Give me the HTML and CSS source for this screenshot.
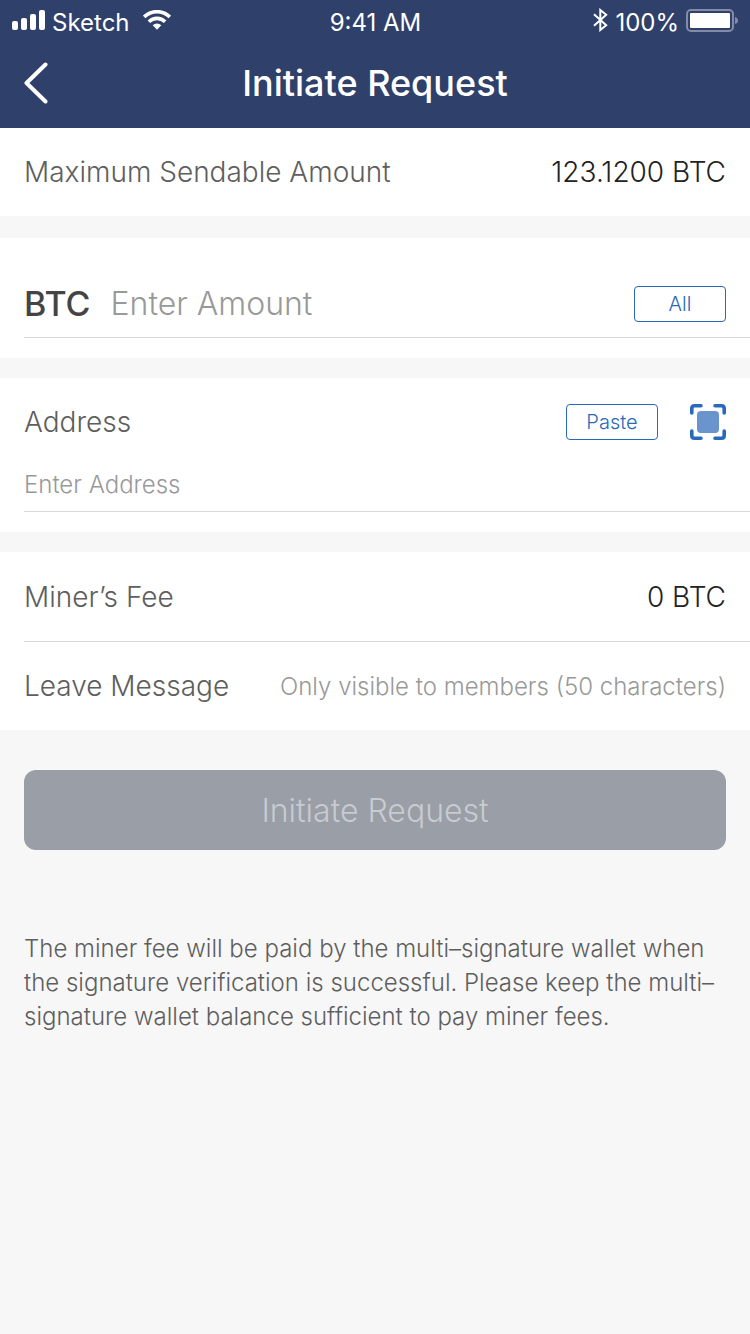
FILE: index.html
```html
<!DOCTYPE html>
<html lang="en">
<head>
<meta charset="utf-8">
<meta name="viewport" content="width=device-width, initial-scale=1">
<title>Initiate Request</title>
<link rel="stylesheet" href="styles.css">
</head>
<body>
<header class="header">
  <div class="status">
    <div class="status-left">
      <svg class="signal" width="33" height="20" viewBox="0 0 33 20" fill="currentColor" aria-hidden="true">
        <rect x="0" y="11" width="6" height="9" rx="2"/><rect x="9" y="8" width="6" height="12" rx="2"/><rect x="18" y="4" width="6" height="16" rx="2"/><rect x="27" y="0" width="6" height="20" rx="2"/>
      </svg>
      <span>Sketch</span>
      <svg class="wifi" width="28" height="20" viewBox="0 0 28 20" aria-hidden="true">
        <g fill="none" stroke="currentColor" stroke-width="3.6"><path d="M1.2 6.9a18.2 18.2 0 0 1 25.6 0"/><path d="M5.9 11.7a11.6 11.6 0 0 1 16.2 0"/></g>
        <path d="M9.700 15.200a6.200 6.200 0 0 1 8.600 0L14 19.800z" fill="currentColor"/>
      </svg>
    </div>
    <span class="time">9:41 AM</span>
    <div class="status-right">
      <svg class="bluetooth" width="15" height="24" viewBox="0 0 15 24" fill="none" stroke="currentColor" stroke-width="2" aria-hidden="true"><path d="M1 6.200l12.200 11.100L7.300 22V2l5.900 4.700L1 17.800"/></svg>
      <span>100%</span>
      <svg class="battery" width="53" height="23" viewBox="0 0 53 23" aria-hidden="true">
        <rect x="1" y="1" width="46" height="21" rx="4" fill="none" stroke="currentColor" stroke-width="2" opacity=".4"/>
        <rect x="4" y="4" width="40" height="15" rx="1" fill="currentColor"/>
        <path d="M49 8q3 1 3 3.500T49 15z" fill="currentColor" opacity=".4"/>
      </svg>
    </div>
  </div>
  <nav class="nav">
    <button class="back" type="button" aria-label="Back">
      <svg width="24" height="42" viewBox="0 0 24 42" fill="none" stroke="currentColor" stroke-width="4" stroke-linecap="round" stroke-linejoin="round"><path d="M21.500 2.500L2.500 21l19 18.500"/></svg>
    </button>
    <h1 class="title">Initiate Request</h1>
  </nav>
</header>
<main>
  <form class="form">
    <section class="panel summary">
      <div class="row"><span>Maximum Sendable Amount</span><span class="value">123.1200 BTC</span></div>
    </section>
    <section class="panel amount">
      <div class="amount-row">
        <label class="unit" for="amount">BTC</label>
        <input class="field field-large" id="amount" type="text" inputmode="decimal" placeholder="Enter Amount">
        <button class="small-button" type="button">All</button>
      </div>
    </section>
    <section class="panel address">
      <div class="address-head">
        <label class="address-label" for="address">Address</label>
        <button class="small-button" type="button">Paste</button>
        <button class="scan" type="button" aria-label="Scan code">
          <svg width="36" height="36" viewBox="0 0 36 36" aria-hidden="true">
            <g fill="none" stroke="#2969b9" stroke-width="3.600" stroke-linecap="round"><path d="M1.800 9V4.500q0-2.700 2.700-2.700H11M25 1.800h6.500q2.700 0 2.700 2.700V9M34.200 27v4.500q0 2.700-2.700 2.700H25M11 34.200H4.500q-2.700 0-2.700-2.700V27"/></g>
            <rect x="7" y="7" width="22" height="22" rx="4" fill="#6994cd"/>
          </svg>
        </button>
      </div>
      <div class="address-row"><input class="field" id="address" type="text" placeholder="Enter Address"></div>
    </section>
    <section class="panel">
      <div class="row divided"><span>Miner’s Fee</span><span class="value">0 BTC</span></div>
      <div class="row">
        <label for="message">Leave Message</label>
        <input class="field field-end" id="message" type="text" maxlength="50" placeholder="Only visible to members (50 characters)">
      </div>
    </section>
    <button class="submit" type="submit" disabled>Initiate Request</button>
  </form>
  <p class="note">The miner fee will be paid by the multi–signature wallet when the signature verification is successful. Please keep the multi–signature wallet balance sufficient to pay miner fees.</p>
</main>
</body>
</html>
```

FILE: styles.css
```css
* { box-sizing: border-box; }

body {
  margin: 0;
  min-height: 100vh;
  background: #f7f7f7;
  color: #5e5e5e;
  font-family: Inter, "Noto Sans", sans-serif;
  font-size: 28px;
  font-weight: 300;
}

button, input {
  margin: 0;
  padding: 0;
  border: 0;
  background: none;
  color: inherit;
  font: inherit;
}

svg { display: block; flex: none; }

.header { background: #2f406b; color: #fff; }

.status {
  display: grid;
  grid-template-columns: 1fr auto 1fr;
  align-items: center;
  height: 40px;
  padding: 5px 11px 0 12px;
  font-size: 24px;
  font-weight: 400;
}

.status-left, .status-right { display: flex; align-items: center; gap: 7px; }
.status-right { justify-content: flex-end; }
.signal, .wifi, .battery, .bluetooth { margin-bottom: 5px; }
.wifi { margin-left: 6px; }

.nav {
  display: grid;
  grid-template-columns: 1fr auto 1fr;
  align-items: center;
  height: 88px;
  padding: 0 24px 2px;
}

.back { justify-self: start; }
.title { margin: 0; font-size: 36px; font-weight: 500; }

.form { display: flex; flex-direction: column; gap: 20px; }

.panel { padding-left: 24px; background: #fff; }
.summary { margin-bottom: 2px; }

.row {
  display: flex;
  align-items: center;
  justify-content: space-between;
  gap: 24px;
  height: 88px;
  padding-right: 24px;
}

.divided { height: 90px; border-bottom: 1px solid #d9d9d9; }
.value { color: #222; }

.amount { padding-top: 32px; padding-bottom: 20px; }

.amount-row {
  display: flex;
  align-items: center;
  gap: 20px;
  height: 68px;
  padding-right: 24px;
  border-bottom: 1px solid #d9d9d9;
}

.unit { color: #444; font-size: 34px; font-weight: 500; }

.field { flex: 1; min-width: 0; width: 100%; font-size: 24px; outline: 0; }
.field::placeholder { color: #999; opacity: 1; }
.field-large { font-size: 32px; }
.field-end { text-align: right; }

.small-button {
  width: 92px;
  height: 36px;
  border: 1px solid #2969b9;
  border-radius: 4px;
  color: #2969b9;
  font-size: 20px;
}

.address { padding-bottom: 20px; }

.address-head {
  display: flex;
  align-items: center;
  height: 88px;
  gap: 32px;
  padding-right: 24px;
}

.address-label { flex: 1; }

.address-row {
  height: 46px;
  padding-right: 24px;
  border-bottom: 1px solid #d9d9d9;
}

.submit {
  height: 80px;
  margin: 20px 24px 0;
  border-radius: 12px;
  background: #9a9ea6;
  color: #c8cbd0;
  font-size: 32px;
}

.note {
  margin: 82px 24px 0;
  font-size: 24px;
  line-height: 34px;
}
```
